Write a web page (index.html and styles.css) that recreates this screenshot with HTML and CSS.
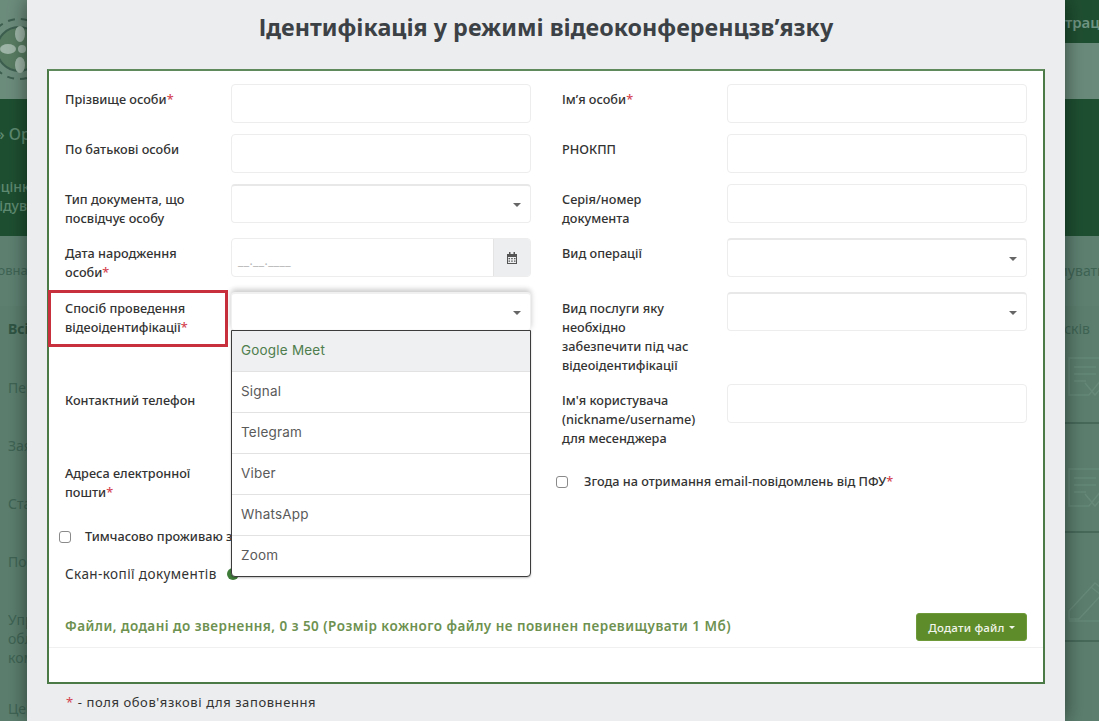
FILE: index.html
```html
<!DOCTYPE html>
<html lang="uk">
<head>
<meta charset="utf-8">
<title>Ідентифікація</title>
<link rel="stylesheet" href="styles.css">
</head>
<body>
<div class="page">
  <div class="backdrop">
    <div class="top">
      <div class="logo-col">
        <svg class="logo" width="56" height="76" viewBox="0 0 56 76">
          <circle cx="19" cy="38" r="22" fill="#587c62" stroke="#3d5f50" stroke-width="2"/>
          <circle cx="19" cy="38" r="30" fill="none" stroke="#3d5f50" stroke-width="2" stroke-dasharray="7 6"/>
          <ellipse cx="20" cy="23" rx="5" ry="8" fill="#9db5a6"/>
          <ellipse cx="20" cy="54" rx="5" ry="8" fill="#9db5a6"/>
          <ellipse cx="8" cy="38" rx="8" ry="5" fill="#9db5a6"/>
          <ellipse cx="22" cy="38" rx="4" ry="4" fill="#9db5a6"/>
        </svg>
      </div>
      <div class="top-right">
        <div class="nav"><span class="nav-item">Реєстрація</span></div>
        <div class="subnav"></div>
      </div>
    </div>
    <div class="band">
      <div class="band-title">» Організації</div>
      <div class="band-text">Оцінка<br>Відувачів</div>
    </div>
    <div class="tabs">
      <span class="tab-left">Головна</span>
      <span class="edge">Сформувати</span>
    </div>
    <div class="list">
      <div class="list-left">
        <b class="list-head">Всі</b>
        <span>Перелік</span>
        <span>Заява</span>
        <span>Стан</span>
        <span>Пошук</span>
        <span>Управління<br>обліковими<br>компаніями</span>
        <span class="list-last">Центр</span>
      </div>
      <div class="list-right">
        <div class="cell-head">Списків</div>
        <div class="cell cell-first"><svg width="50" height="50" viewBox="0 0 50 50"><path d="M4 3h32v22L24 40H4zM9 12h22M9 19h22M9 26h12M20 28l10 12 14-16" fill="none" stroke="#668979" stroke-width="1.500"/></svg></div>
        <div class="cell"><svg width="50" height="50" viewBox="0 0 50 50"><path d="M4 3h32v22L24 40H4zM9 12h22M9 19h22M9 26h12M20 28l10 12 14-16" fill="none" stroke="#668979" stroke-width="1.500"/></svg></div>
        <div class="cell"><svg width="50" height="50" viewBox="0 0 50 50"><path d="M4 36 30 8l10 8-26 28H4zM26 12l10 8M4 46h40" fill="none" stroke="#668979" stroke-width="1.500"/></svg></div>
      </div>
    </div>
  </div>

  <div class="modal">
    <h1 class="title">Ідентифікація у режимі відеоконференцзв’язку</h1>
    <div class="form-box">
      <div class="grid">
        <label class="lbl">Прізвище особи<i>*</i></label>
        <input class="ctl" type="text">
        <label class="lbl lbl-r">Ім’я особи<i>*</i></label>
        <input class="ctl" type="text">

        <label class="lbl">По батькові особи</label>
        <input class="ctl" type="text">
        <label class="lbl lbl-r">РНОКПП</label>
        <input class="ctl" type="text">

        <label class="lbl">Тип документа, що посвідчує особу</label>
        <div class="ctl sel"><span class="caret"></span></div>
        <label class="lbl lbl-r">Серія/номер документа</label>
        <input class="ctl" type="text">

        <label class="lbl">Дата народження особи<i>*</i></label>
        <div class="date">
          <span class="date-in">__.__.____</span>
          <span class="date-btn">
            <svg width="12" height="12" viewBox="0 0 12 12"><path d="M1 2h10v10H1zM3 0h1.500v3H3zM7.500 0H9v3H7.500z" fill="#555"/><path d="M2 5h8v6H2z" fill="#eceeef"/><path d="M2.500 6h1.500v1.200H2.500zM5.200 6h1.500v1.200H5.200zM8 6h1.500v1.200H8zM2.500 8.500h1.500v1.200H2.500zM5.200 8.500h1.500v1.200H5.200zM8 8.500h1.500v1.200H8z" fill="#555"/></svg>
          </span>
        </div>
        <label class="lbl lbl-r">Вид операції</label>
        <div class="ctl sel"><span class="caret"></span></div>

        <label class="lbl low marked">Спосіб проведення відеоідентифікації<i>*</i><span class="redbox"></span></label>
        <div class="ctl sel open">
          <span class="caret"></span>
          <ul class="menu">
            <li class="active">Google Meet</li>
            <li>Signal</li>
            <li>Telegram</li>
            <li>Viber</li>
            <li>WhatsApp</li>
            <li>Zoom</li>
          </ul>
        </div>
        <label class="lbl lbl-r low">Вид послуги яку необхідно забезпечити під час відеоідентифікації</label>
        <div class="ctl sel"><span class="caret"></span></div>

        <label class="lbl low tall">Контактний телефон</label>
        <input class="ctl" type="text">
        <label class="lbl lbl-r low tall">Ім'я користувача (nickname/username) для месенджера</label>
        <input class="ctl" type="text">

        <label class="lbl">Адреса електронної пошти<i>*</i></label>
        <input class="ctl" type="text">
        <label class="check check-r"><input type="checkbox"><span>Згода на отримання email-повідомлень від ПФУ<i>*</i></span></label>
      </div>

      <label class="check check-l"><input type="checkbox"><span>Тимчасово проживаю за кордоном</span></label>
      <div class="scan">Скан-копії документів<span class="dot"></span></div>

      <div class="files">
        <span class="files-text">Файли, додані до звернення, 0 з 50 (Розмір кожного файлу не повинен перевищувати 1 Мб)</span>
        <button class="add" type="button">Додати файл<span class="btn-caret"></span></button>
      </div>
      <div class="rule"></div>
    </div>
    <p class="note"><i>*</i> - поля обов'язкові для заповнення</p>
  </div>
</div>
</body>
</html>
```
FILE: styles.css
```css
* { box-sizing: border-box; }
html, body { margin: 0; padding: 0; }
body { font-family: "Noto Sans", "Open Sans", sans-serif; color: #333; }
.page { position: relative; width: 1099px; height: 721px; overflow: hidden; background: #5b7e6e; }

/* dimmed page behind the dialog */
.backdrop { width: 1099px; height: 721px; overflow: hidden; color: #3f6454; font-size: 14px; }
.top { display: flex; height: 99px; background: #6c8c7c; }
.logo-col { width: 40px; padding-top: 11px; flex: none; overflow: hidden; }
.logo { display: block; }
.top-right { flex: 1; display: flex; flex-direction: column; }
.nav { height: 43px; background: #1f4f31; color: #6f9583; font-size: 15px; line-height: 44px; padding-left: 992px; white-space: nowrap; overflow: hidden; font-weight: 600; }
.subnav { flex: 1; background: #6a8b7c; }
.band { height: 137px; background: #1e4f31; color: #5f8b72; padding: 22px 0 0 0; white-space: nowrap; }
.band-title { font-size: 16px; line-height: 26px; font-weight: 500; margin-left: -4px; }
.band-text { font-size: 14px; line-height: 19px; font-weight: 500; margin: 30px 0 0 -10px; }
.tabs { display: flex; justify-content: space-between; height: 70px; padding-top: 25px; line-height: 19px; background: #5d8071; white-space: nowrap; }
.tab-left { margin-left: -24px; font-size: 13px; }
.edge { width: 64px; flex: none; overflow: hidden; text-indent: -14px; }
.list { display: flex; justify-content: space-between; height: 415px; white-space: nowrap; }
.list-left { display: flex; flex-direction: column; gap: 39px; padding: 13px 0 0 8px; line-height: 19px; }
.list-head { margin-bottom: 1px; color: #2f5443; }
.list-last { margin-top: -7px; }
.list-right { width: 54px; flex: none; }
.cell-head { height: 47px; padding-top: 13px; line-height: 19px; text-indent: -7px; overflow: hidden; }
.cell { height: 109px; padding: 42px 0 0 20px; border-bottom: 2px solid #46695a; overflow: hidden; }
.cell-first { height: 71px; padding-top: 2px; }
.cell svg { display: block; }

/* dialog */
.modal { position: absolute; left: 27px; top: 0; width: 1038px; height: 721px; background: #ebedef; box-shadow: 0 0 18px rgba(0,0,0,.5); }
.title { margin: 0; padding: 13px 0 0 0; height: 69px; text-align: center; font-size: 23.300px; line-height: 28px; font-weight: 700; color: #3c4146; }
.form-box { margin-left: 20px; width: 998px; height: 615px; background: #fff; border: 2px solid #4b7a47; border-top-color: #5e8a5c; padding: 13px 16px 0; }
.grid { display: grid; grid-template-columns: 166px 300px 196px 300px; row-gap: 11px; align-items: start; }
.lbl { display: block; position: relative; padding: 6px 12px 0 0; margin-bottom: -1px; font-size: 12.700px; line-height: 19px; font-weight: 500; color: #333; }
.lbl i, .check i, .note i { color: #d4434f; font-style: normal; }
.lbl-r { padding-left: 31px; padding-right: 24px; }
.low { padding-top: 7px; margin-bottom: -2px; }
.tall { padding-bottom: 1px; }
.ctl { display: block; width: 300px; height: 39px; margin: 0; padding: 0 12px; background: #fff; border: 1px solid #ededed; border-radius: 4px; font: inherit; }
.sel { position: relative; border-top: 2px solid #e8e8e8; }
.caret { position: absolute; right: 9px; top: 17px; border: 4px solid transparent; border-top-color: #666; border-bottom: 0; }
.open { border-top-color: #fff; box-shadow: 0 -3px 5px rgba(0,0,0,.16), 0 0 8px rgba(0,0,0,.07); border-color: #f0f0f0; }

.date { display: flex; width: 300px; height: 39px; border: 1px solid #ededed; border-radius: 4px; overflow: hidden; }
.date-in { flex: 1; padding-left: 6px; line-height: 43px; font-size: 12px; color: #b5b5b5; letter-spacing: .4px; }
.date-btn { display: flex; align-items: center; justify-content: center; width: 37px; background: #eceeef; border-left: 1px solid #e4e4e4; }

.redbox { position: absolute; left: -17px; top: -2px; width: 180px; height: 57px; border: 3px solid #c9303d; }

.menu { position: absolute; left: -1px; top: 36px; z-index: 3; width: 300px; margin: 0; padding: 0; list-style: none; background: #fff; border: 1px solid #3c3c3c; border-radius: 0 0 4px 4px; box-shadow: 0 1px 2px rgba(0,0,0,.25); }
.menu li { height: 41px; padding-left: 9px; line-height: 38px; font-family: "Inter", "Liberation Sans", sans-serif; font-size: 13.500px; color: #5a5a5a; border-bottom: 1px solid #e2e2e2; letter-spacing: .2px; }
.menu li:last-child { border-bottom: 0; height: 40px; }
.menu .active { background: #eef0f1; color: #4f7d4e; }

.check { display: flex; align-items: center; font-size: 12.700px; line-height: 19px; font-weight: 500; color: #333; white-space: nowrap; }
.check input { appearance: none; flex: none; width: 12px; height: 12px; margin: 0; background: #fff; border: 1px solid #8a8a8a; border-radius: 3px; }
.check-r { grid-column: 3 / 5; padding: 14px 0 0 25px; }
.check-r input { margin-right: 16px; }
.check-l { margin: 26px 0 0 -6px; }
.check-l input { margin-right: 14px; }
.scan { display: flex; align-items: center; margin-top: 18px; height: 19px; font-size: 13.500px; font-weight: 400; color: #333; letter-spacing: .42px; white-space: nowrap; }
.dot { width: 12px; height: 12px; margin-left: 10px; border-radius: 50%; background: #3f7d3a; }
.files { display: flex; align-items: center; justify-content: space-between; height: 28px; margin-top: 30px; }
.files-text { padding-bottom: 2px; font-size: 13.500px; font-weight: 600; color: #6d9150; letter-spacing: .46px; white-space: nowrap; }
.add { display: flex; align-items: center; justify-content: center; width: 111px; height: 28px; padding: 0; background: #5f8c2b; border: 1px solid #6e9a3a; border-radius: 3px; color: #f2f5ec; font: 500 11.500px "Noto Sans", sans-serif; letter-spacing: .2px; }
.btn-caret { margin-left: 4px; border: 3px solid transparent; border-top-color: #f2f5ec; border-bottom: 0; }
.rule { height: 1px; margin: 6px -16px 0; background: #f0f0f0; }
.note { margin: 9px 0 0 39px; font-size: 13px; line-height: 19px; color: #333; letter-spacing: .58px; }
```
